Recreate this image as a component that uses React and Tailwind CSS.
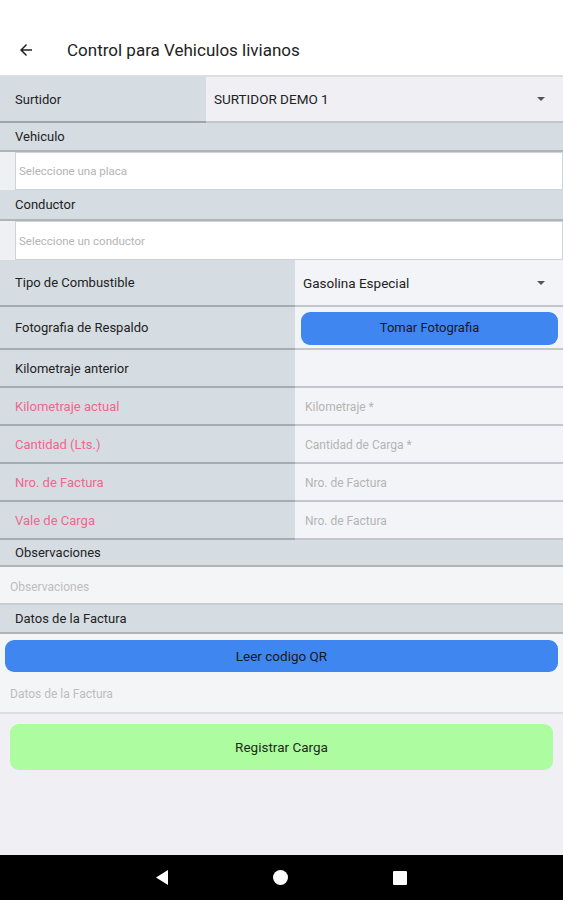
import React from "react";

const Row = ({ label, pink, children, h = "h-[38px]" }) => (
  <div className={`flex ${h}`}>
    <div className="w-[295px] bg-[#d6dde2] border-b-2 border-[#a7acb0] flex items-center pl-[15px] pt-[1px]">
      <span className={`text-[13px] ${pink ? "text-[#f0668f]" : "text-[#222]"}`}>{label}</span>
    </div>
    <div className="flex-1 bg-[#f3f4f7] border-b-2 border-[#c3c6ca] flex items-center pt-[1px]">{children}</div>
  </div>
);

const Label = ({ children, h = "h-[30px]" }) => (
  <div className={`${h} bg-[#d6dde2] border-b-2 border-[#b0b4b8] flex items-center pl-[15px] pt-[1px] text-[13px] text-[#222]`}>
    {children}
  </div>
);

const Caret = () => (
  <svg width="8" height="5" viewBox="0 0 10 6" className="mr-[18px]">
    <path d="M0 0h10L5 5z" fill="#555" />
  </svg>
);

const App = () => {
  return (
    <div className="w-[563px] h-[900px] flex flex-col bg-[#efeff4] font-['Roboto',sans-serif] overflow-hidden">
      <div className="h-[77px] bg-white border-b-2 border-[#dcdee1] flex items-end pb-[16px]">
        <svg width="18" height="18" viewBox="0 0 24 24" className="ml-[17px]">
          <path d="M20 11H7.83l5.59-5.59L12 4l-8 8 8 8 1.41-1.41L7.83 13H20v-2z" fill="#222" />
        </svg>
        <span className="ml-[32px] text-[17px] text-[#222] leading-none">Control para Vehiculos livianos</span>
      </div>

      <div className="flex h-[46px]">
        <div className="w-[206px] bg-[#d6dde2] border-b-2 border-[#9fa4a8] flex items-center pl-[15px] pt-[1px] text-[13px] text-[#222]">
          Surtidor
        </div>
        <div className="flex-1 bg-[#efeff4] border-b-2 border-[#c3c6ca] flex items-center justify-between pl-[8px] pt-[1px]">
          <span className="text-[13.5px] text-[#222]">SURTIDOR DEMO 1</span>
          <Caret />
        </div>
      </div>

      <Label h="h-[29px]">Vehiculo</Label>
      <div className="h-[38px] flex bg-[#eef0f3]">
        <div className="ml-[15px] flex-1 bg-white border border-[#cfd2d6] flex items-center pl-[3px] pt-[2px] text-[11.5px] text-[#b4b4b4]">
          Seleccione una placa
        </div>
      </div>
      <Label h="h-[31px]">Conductor</Label>
      <div className="h-[39px] flex bg-[#eef0f3]">
        <div className="ml-[15px] flex-1 bg-white border border-[#cfd2d6] flex items-center pl-[3px] pt-[2px] text-[11.5px] text-[#b4b4b4]">
          Seleccione un conductor
        </div>
      </div>

      <Row label="Tipo de Combustible" h="h-[47px]">
        <div className="flex-1 flex items-center justify-between pl-[8px]">
          <span className="text-[13.5px] text-[#222]">Gasolina Especial</span>
          <Caret />
        </div>
      </Row>
      <Row label="Fotografia de Respaldo" h="h-[43px]">
        <button className="ml-[6px] mr-[5px] flex-1 h-[33px] rounded-[9px] bg-[#4086f1] text-[13px] text-[#1a1a1a]">
          Tomar Fotografia
        </button>
      </Row>
      <Row label="Kilometraje anterior" />
      <Row label="Kilometraje actual" pink>
        <span className="pl-[10px] text-[12px] text-[#b4b4b4]">Kilometraje *</span>
      </Row>
      <Row label="Cantidad (Lts.)" pink>
        <span className="pl-[10px] text-[12px] text-[#b4b4b4]">Cantidad de Carga *</span>
      </Row>
      <Row label="Nro. de Factura" pink>
        <span className="pl-[10px] text-[12px] text-[#b4b4b4]">Nro. de Factura</span>
      </Row>
      <Row label="Vale de Carga" pink>
        <span className="pl-[10px] text-[12px] text-[#b4b4b4]">Nro. de Factura</span>
      </Row>

      <Label h="h-[27px]">Observaciones</Label>
      <div className="h-[38px] bg-[#f4f5f7] border-b-2 border-[#c9ccd0] flex items-center pl-[10px] pt-[3px] text-[12px] text-[#bdbdbd]">
        Observaciones
      </div>
      <Label h="h-[29px]">Datos de la Factura</Label>
      <div className="bg-[#f4f5f7] pt-[6px] pb-[3px] px-[5px]">
        <button className="w-full h-[32px] rounded-[9px] bg-[#4086f1] text-[13.5px] text-[#1a1a1a]">
          Leer codigo QR
        </button>
      </div>
      <div className="h-[39px] bg-[#f4f5f7] border-b-2 border-[#dcdee1] flex items-center pl-[10px] pt-[1px] text-[12px] text-[#bdbdbd]">
        Datos de la Factura
      </div>

      <div className="flex-1 px-[10px] pt-[10px]">
        <button className="w-full h-[46px] rounded-[9px] bg-[#adfca0] text-[13.5px] text-[#1f2a1f]">
          Registrar Carga
        </button>
      </div>

      <div className="h-[45px] bg-black flex items-center justify-center gap-[105px]">
        <svg width="12" height="15" viewBox="0 0 12 15">
          <path d="M12 0v15L0 7.5z" fill="#fff" />
        </svg>
        <div className="w-[15px] h-[15px] rounded-full bg-white" />
        <div className="w-[14px] h-[14px] rounded-[1px] bg-white" />
      </div>
    </div>
  );
};

export default App;
